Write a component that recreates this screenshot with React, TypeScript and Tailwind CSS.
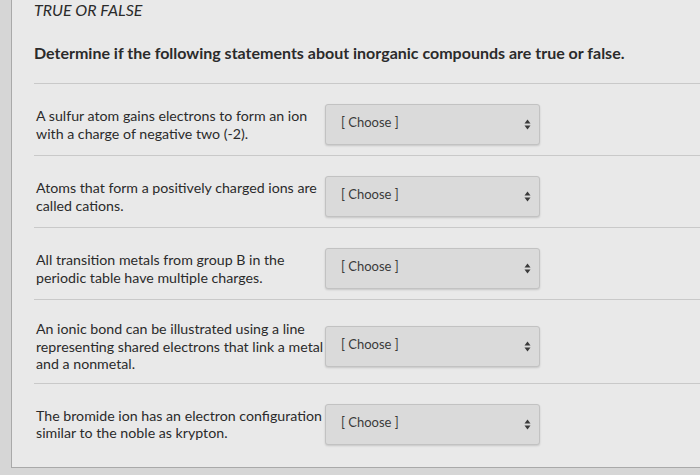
import React from "react";

const questions = [
  "A sulfur atom gains electrons to form an ion with a charge of negative two (-2).",
  "Atoms that form a positively charged ions are called cations.",
  "All transition metals from group B in the periodic table have multiple charges.",
  "An ionic bond can be illustrated using a line representing shared electrons that link a metal and a nonmetal.",
  "The bromide ion has an electron configuration similar to the noble as krypton.",
];

function ChooseSelect() {
  return (
    <div className="w-[215px] h-[41px] shrink-0 flex items-center justify-between pl-[15px] pr-[8px] rounded-[3px] border border-[#c2c2c2] bg-[#dadada] shadow-[0_1px_2px_rgba(0,0,0,0.15)]">
      <span className="text-[13px] text-[#3a3a3a] -mt-[3px]">[ Choose ]</span>
      <svg width="7" height="11" viewBox="0 0 7 11">
        <path d="M3.5 0.5 L6.5 4.5 H0.5 Z" fill="#3a3a3a" />
        <path d="M3.5 10.5 L6.5 6.5 H0.5 Z" fill="#3a3a3a" />
      </svg>
    </div>
  );
}

export default function App() {
  return (
    <div
      className="w-[700px] h-[475px] bg-[#d6d6d6] pl-[11px] overflow-hidden"
      style={{ fontFamily: "Lato, 'Open Sans', sans-serif" }}
    >
      <div className="h-[468px] bg-[#e9e9e9] border-l border-b border-[#a9a9a9] pl-[22px] text-[#2b2b2b]">
        <div className="text-[16px] italic leading-[20px]">TRUE OR FALSE</div>
        <div className="text-[16px] font-bold leading-[20px] mt-[23px]">
          Determine if the following statements about inorganic compounds are true or false.
        </div>
        <div className="mt-[20px]">
          {questions.map((text, i) => (
            <div
              key={i}
              className="flex items-center border-t border-[#c9c9c9] pt-[20px] pb-[10px] pl-[2px]"
            >
              <div className="w-[289px] text-[14.2px] leading-[17.5px]">{text}</div>
              <ChooseSelect />
            </div>
          ))}
        </div>
      </div>
    </div>
  );
}
